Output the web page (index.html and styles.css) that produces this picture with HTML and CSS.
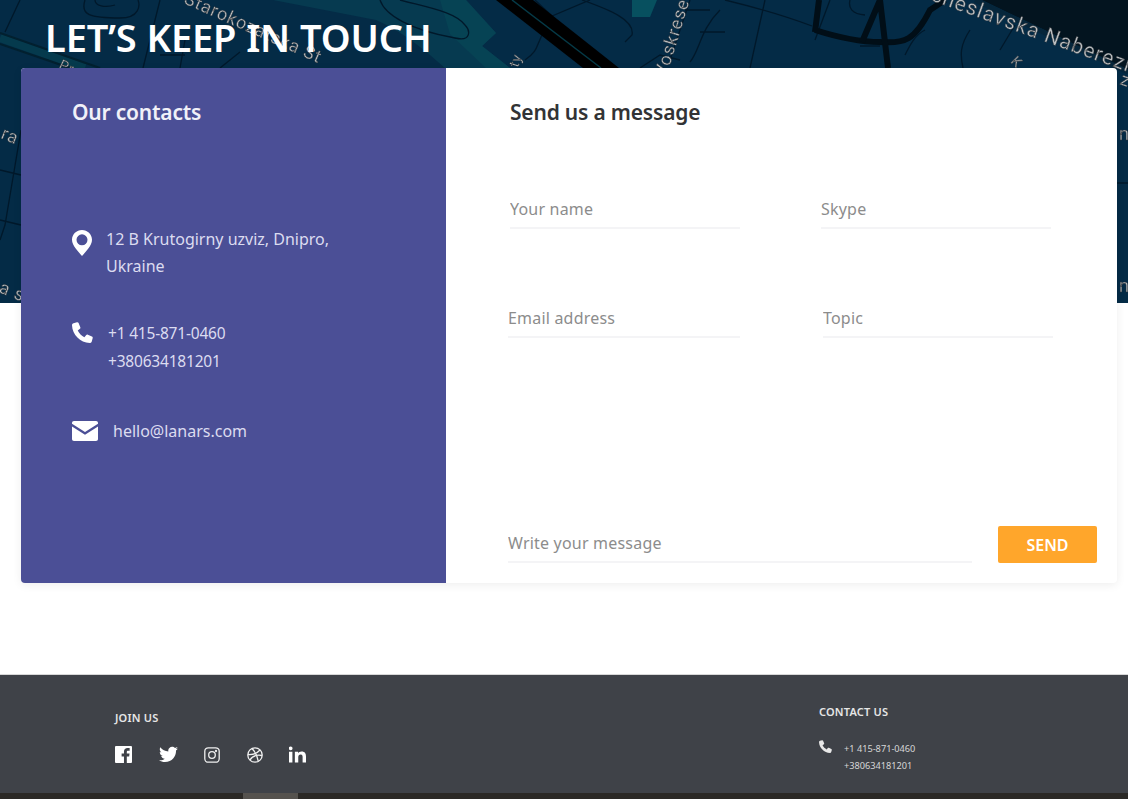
FILE: index.html
```html
<!DOCTYPE html>
<html lang="en">
<head>
  <meta charset="UTF-8" />
  <meta name="viewport" content="width=device-width, initial-scale=1.0"/>
  <title>Let's keep in touch</title>
  <link rel="stylesheet" href="styles.css">
</head>
<body>

  <!-- Map header -->
  <header class="hero">
    <svg class="hero-map" viewBox="0 0 1128 303" preserveAspectRatio="none" aria-hidden="true">
      <rect width="1128" height="303" fill="#042b46"/>
      <path d="M1128 0H982L1128 70Z" fill="#03141f"/>
      <path d="M975 0L1128 72" stroke="#06263b" stroke-width="5" fill="none"/>
      <path d="M273 0H466L496 33L482 46L510 68H445C425 50 400 30 376 20Z" fill="#063a50"/>
      <path d="M466 0L496 33L482 46L510 68H486L450 34L440 0Z" fill="#064354"/>
      <path d="M632 0H657L650 17H632Z" fill="#07505f"/>
      <path d="M0 38L85 68" stroke="#053a4d" stroke-width="8" fill="none"/>
      <path d="M0 33L100 68M0 44L70 68" stroke="#02202f" stroke-width="2" fill="none"/>
      <g class="map-thin">
        <path d="M20 0L5 32M85 0C80 15 90 18 120 18C140 18 140 5 138 0M95 0C95 6 105 8 115 5"/>
        <path d="M160 0L143 68M185 40L180 68M160 55H185M220 68L240 52"/>
        <path d="M380 0C385 15 410 30 455 38C472 42 470 30 465 25C455 12 430 8 400 0"/>
        <path d="M535 0L552 16L590 0M545 30C535 45 540 50 525 60M582 0C610 10 635 20 632 35L625 42"/>
        <path d="M690 0L670 60M685 10H710M720 10C700 30 700 50 690 62M700 32H725M640 68L660 55L680 60"/>
        <path d="M725 0C750 6 780 14 812 26M765 0L750 68M830 0L815 40"/>
        <path d="M860 46H880M850 0C848 8 852 14 865 15M925 30C915 35 910 45 905 55M970 30C960 45 960 55 963 68M1015 25L1000 50"/>
        <path d="M0 170L21 175M0 220L21 225M21 130L5 225L0 240M1117 183H1128"/>
      </g>
      <g class="map-thick">
        <path d="M819 0L815 32M815 30C840 38 860 42 880 42C905 44 915 40 930 10L945 0"/>
        <path d="M880 0L862 42M880 0L888 68"/>
      </g>
      <path d="M496 0H533L619 68H583Z" fill="#000"/>
      <path d="M512 0L601 68" stroke="#053a47" stroke-width="1.500" fill="none"/>
      <g class="map-label">
        <text transform="translate(183 3) rotate(24)">Starokozatska St</text>
        <text transform="translate(930 0) rotate(20)" class="map-label-large">cheslavska Naberezhna</text>
        <text transform="translate(666 78) rotate(-73)">Voskresenska</text>
        <text transform="translate(518 68) rotate(-72)" class="map-label-small">ty</text>
        <text transform="translate(1010 62) rotate(45)" class="map-label-small">K</text>
        <text transform="translate(58 68) rotate(25)" class="map-label-small">Pr</text>
        <text transform="translate(0 138) rotate(22)">ra</text>
        <text transform="translate(-2 292) rotate(22)">a s</text>
        <text transform="translate(1119 140)">n</text>
        <text transform="translate(1119 292)">n</text>
        <text transform="translate(1119 84) rotate(20)">zh</text>
      </g>
    </svg>
    <h1 class="hero-title">LET’S KEEP IN TOUCH</h1>
  </header>

  <main class="contact-card">
    <!-- Contacts side -->
    <section class="contacts">
      <h2 class="card-title">Our contacts</h2>

      <div class="contact-row contact-row-address">
        <svg class="icon icon-pin" viewBox="0 0 20 26"><path fill-rule="evenodd" d="M10 0C4.500 0 0 4.400 0 9.800C0 15.500 6 21.500 10 26C14 21.500 20 15.500 20 9.800C20 4.400 15.500 0 10 0ZM10 4.300A5.500 5.500 0 1 1 10 15.300A5.500 5.500 0 1 1 10 4.300Z"/></svg>
        <p>12 B Krutogirny uzviz, Dnipro,<br>Ukraine</p>
      </div>

      <div class="contact-row contact-row-phone">
        <svg class="icon icon-phone" viewBox="0 0 22 22"><path d="M5.200.3L1.600 1.300C.6 1.600 0 2.400 0 3.400C.4 13.300 8.700 21.600 18.600 22C19.600 22 20.400 21.400 20.700 20.400L21.700 16.800C21.900 16.100 21.600 15.400 20.900 15.100L16.600 13.300C16 13 15.300 13.200 14.900 13.700L13 16C10 14.500 7.500 12 6 9L8.300 7.100C8.800 6.700 9 6 8.700 5.400L6.900 1.100C6.600.4 5.900.1 5.200.3Z"/></svg>
        <p>+1 415-871-0460<br>+380634181201</p>
      </div>

      <div class="contact-row contact-row-mail">
        <svg class="icon icon-mail" viewBox="0 0 26 20"><path d="M2 0H24C25.200 0 26 .8 26 2V2.800L13 11L0 2.800V2C0 .8 .8 0 2 0ZM0 5.600L13 13.800L26 5.600V18C26 19.200 25.200 20 24 20H2C.8 20 0 19.200 0 18Z"/></svg>
        <p>hello@lanars.com</p>
      </div>
    </section>

    <!-- Message form -->
    <form class="message-form">
      <h2 class="card-title card-title-dark">Send us a message</h2>

      <div class="field-row field-row-first">
        <input type="text" class="field" placeholder="Your name" />
        <input type="text" class="field" placeholder="Skype" />
      </div>

      <div class="field-row field-row-second">
        <input type="email" class="field field-email" placeholder="Email address" />
        <input type="text" class="field" placeholder="Topic" />
      </div>

      <div class="send-row">
        <input type="text" class="field field-message" placeholder="Write your message" />
        <button type="button" class="send-btn">SEND</button>
      </div>
    </form>
  </main>

  <footer class="site-footer">
    <div class="footer-join">
      <h3 class="footer-title">JOIN US</h3>
      <div class="social-list">
        <svg class="social" viewBox="0 0 18 18"><path d="M1 0H17C17.600 0 18 .4 18 1V17C18 17.600 17.600 18 17 18H12.500V11H15L15.400 8H12.500V6.300C12.500 5.400 12.800 4.900 14 4.900H15.500V2.200C15.200 2.200 14.300 2.100 13.300 2.100C11.100 2.100 9.500 3.400 9.500 5.900V8H7V11H9.500V18H1C.4 18 0 17.600 0 17V1C0 .4 .4 0 1 0Z"/></svg>
        <svg class="social social-twitter" viewBox="0 0 24 20"><path d="M24 2.400C23.100 2.800 22.200 3.100 21.200 3.200C22.200 2.600 23 1.600 23.400.5C22.400 1.100 21.300 1.500 20.200 1.700C19.300.7 18 .1 16.600.1C13.900.1 11.700 2.300 11.700 5C11.700 5.400 11.700 5.800 11.800 6.100C7.700 5.900 4.100 4 1.700.9C1.300 1.600 1 2.500 1 3.400C1 5.100 1.900 6.600 3.200 7.500C2.400 7.500 1.600 7.300 1 6.900V7C1 9.400 2.700 11.300 4.900 11.800C4.500 11.900 4.100 12 3.600 12C3.300 12 3 12 2.700 11.900C3.300 13.900 5.200 15.300 7.300 15.300C5.600 16.600 3.500 17.400 1.200 17.400C.8 17.400 .4 17.400 0 17.300C2.200 18.700 4.800 19.500 7.500 19.500C16.600 19.500 21.500 12 21.500 5.500V4.900C22.500 4.200 23.300 3.300 24 2.400Z"/></svg>
        <svg class="social social-line" viewBox="0 0 16 16"><rect x=".8" y=".8" width="14.400" height="14.400" rx="3.500"/><circle cx="8" cy="8" r="3.300"/><circle cx="12" cy="4" r=".5"/></svg>
        <svg class="social social-line" viewBox="0 0 16 16"><circle cx="8" cy="8" r="7.200"/><path d="M5 1.500C8 4.500 10.500 9.500 11.300 14.300M1 7.500C5 7.800 10 6.500 13 3M3 13C5 9.500 9 7.500 15 8.500"/></svg>
        <svg class="social social-in" viewBox="0 0 18 17"><path d="M0 5.600H3.600V17H0ZM1.800 0A2 2 0 1 1 1.800 4A2 2 0 1 1 1.800 0ZM6.200 5.600H9.600V7.200C10.200 6.200 11.500 5.300 13.300 5.300C17 5.300 18 7.600 18 10.800V17H14.400V11.500C14.400 10 14.300 8.400 12.400 8.400C10.500 8.400 9.800 9.700 9.800 11.400V17H6.200Z"/></svg>
      </div>
    </div>

    <div class="footer-contact">
      <h3 class="footer-title">CONTACT US</h3>
      <div class="footer-phone">
        <svg class="footer-phone-icon" viewBox="0 0 22 22"><path d="M5.200.3L1.600 1.300C.6 1.600 0 2.400 0 3.400C.4 13.300 8.700 21.600 18.600 22C19.600 22 20.400 21.400 20.700 20.400L21.700 16.800C21.900 16.100 21.600 15.400 20.900 15.100L16.600 13.300C16 13 15.300 13.200 14.900 13.700L13 16C10 14.500 7.500 12 6 9L8.300 7.100C8.800 6.700 9 6 8.700 5.400L6.900 1.100C6.600.4 5.900.1 5.200.3Z"/></svg>
        <p>+1 415-871-0460<br>+380634181201</p>
      </div>
    </div>
  </footer>

  <div class="bottom-strip"><span class="bottom-thumb"></span></div>

</body>
</html>
```

FILE: styles.css
```css
* { box-sizing: border-box; }

html, body {
  height: 799px;
  overflow: hidden;
}

body {
  margin: 0;
  background-color: #fff;
  font-family: "Noto Sans", "Open Sans", sans-serif;
  color: #fff;
}

p, h1, h2, h3 {
  margin: 0;
  font-weight: normal;
}

/* header */
.hero {
  position: relative;
  height: 303px;
  padding: 14px 0 0 45px;
}

.hero-map {
  position: absolute;
  top: 0;
  left: 0;
  width: 100%;
  height: 100%;
  filter: blur(0.6px);
}

.map-thin path {
  fill: none;
  stroke: #01182a;
  stroke-width: 1.300;
}

.map-thick path {
  fill: none;
  stroke: #010e17;
  stroke-width: 6;
}

.map-label text {
  font-family: "Roboto", sans-serif;
  font-size: 18px;
  fill: #bcc0c3;
  stroke: #2c2f33;
  stroke-width: 0.400;
  letter-spacing: 0.8px;
}

.map-label .map-label-small {
  font-size: 14px;
}

.map-label .map-label-large {
  font-size: 21px;
  letter-spacing: 1px;
}

.hero-title {
  position: relative;
  font-size: 38px;
  line-height: 46px;
  font-weight: 600;
  letter-spacing: -0.1px;
  white-space: nowrap;
}

/* card */
.contact-card {
  position: relative;
  display: flex;
  width: 1096px;
  height: 515px;
  margin: -235px 0 0 21px;
  border-radius: 4px;
  background-color: #fff;
  box-shadow: 0 2px 10px rgba(0, 0, 0, 0.07);
  overflow: hidden;
}

.contacts {
  width: 426px;
  padding: 29px 0 0 51px;
  background-color: #4b4f96;
  color: #dcdcf0;
}

.card-title {
  font-size: 21px;
  line-height: 30px;
  font-weight: 600;
  letter-spacing: -0.2px;
  color: #f1f1f8;
}

.card-title-dark {
  color: #323335;
}

.contact-row {
  display: flex;
  font-size: 16px;
  line-height: 28px;
}

.contact-row-address {
  margin-top: 99px;
  gap: 14px;
  line-height: 26.500px;
}

.contact-row-phone {
  margin-top: 40px;
  gap: 15px;
  font-size: 15.500px;
  letter-spacing: -0.2px;
}

.contact-row-mail {
  margin-top: 42px;
  gap: 15px;
  align-items: center;
}

.icon {
  flex: none;
  fill: #fff;
}

.icon-pin {
  width: 20px;
  height: 26px;
  margin-top: 4px;
}

.icon-phone {
  width: 21px;
  height: 21px;
  margin-top: 3px;
}

.icon-mail {
  width: 26px;
  height: 20px;
}

/* form */
.message-form {
  flex: 1;
  display: flex;
  flex-direction: column;
  padding: 29px 20px 20px 64px;
}

.field {
  display: block;
  width: 230px;
  height: 38px;
  padding: 0;
  border: none;
  border-bottom: 2px solid #f4f4f6;
  outline: none;
  background: none;
  font: 16px "Noto Sans", "Open Sans", sans-serif;
  letter-spacing: 0.2px;
  color: #333;
}

.field::placeholder {
  color: #8c8c8c;
  opacity: 1;
}

.field-row {
  display: flex;
}

.field-row-first {
  gap: 81px;
  margin-top: 64px;
}

.field-row-second {
  gap: 83px;
  margin: 71px 0 0 -2px;
}

.field-email {
  width: 232px;
}

.send-row {
  display: flex;
  align-items: flex-end;
  gap: 26px;
  margin: auto 0 0 -2px;
}

.field-message {
  width: 464px;
  height: 39px;
}

.send-btn {
  width: 99px;
  height: 37px;
  border: none;
  border-radius: 2px;
  background-color: #ffa62b;
  color: #fff;
  font: 600 16px "Noto Sans", "Open Sans", sans-serif;
  cursor: pointer;
}

/* footer */
.site-footer {
  display: flex;
  justify-content: space-between;
  height: 119px;
  margin-top: 91px;
  padding: 0 0 0 115px;
  background-color: #3f4248;
  border-top: 1px solid #d8d8d8;
}

.footer-title {
  font-size: 11px;
  line-height: 14px;
  font-weight: 600;
  letter-spacing: 0.2px;
  color: #e6e6e6;
}

.footer-join {
  padding-top: 36px;
}

.social-list {
  display: flex;
  align-items: center;
  gap: 26.500px;
  margin-top: 21px;
}

.social {
  width: 17px;
  height: 17px;
  fill: #fff;
}

.social-twitter {
  width: 19px;
}

.social-line {
  width: 16px;
  height: 16px;
  fill: none;
  stroke: #f0f0f0;
  stroke-width: 1.300;
}

.footer-contact {
  width: 309px;
  padding-top: 30px;
}

.footer-phone {
  display: flex;
  gap: 12px;
  margin-top: 21px;
  font-size: 9.200px;
  line-height: 17px;
  color: #d6d6d6;
}

.footer-phone-icon {
  flex: none;
  width: 13px;
  height: 13px;
  fill: #e8e8e8;
}

.bottom-strip {
  height: 6px;
  padding-left: 243px;
  background-color: #2b2926;
}

.bottom-thumb {
  display: block;
  width: 55px;
  height: 6px;
  background-color: #55524e;
}
```
